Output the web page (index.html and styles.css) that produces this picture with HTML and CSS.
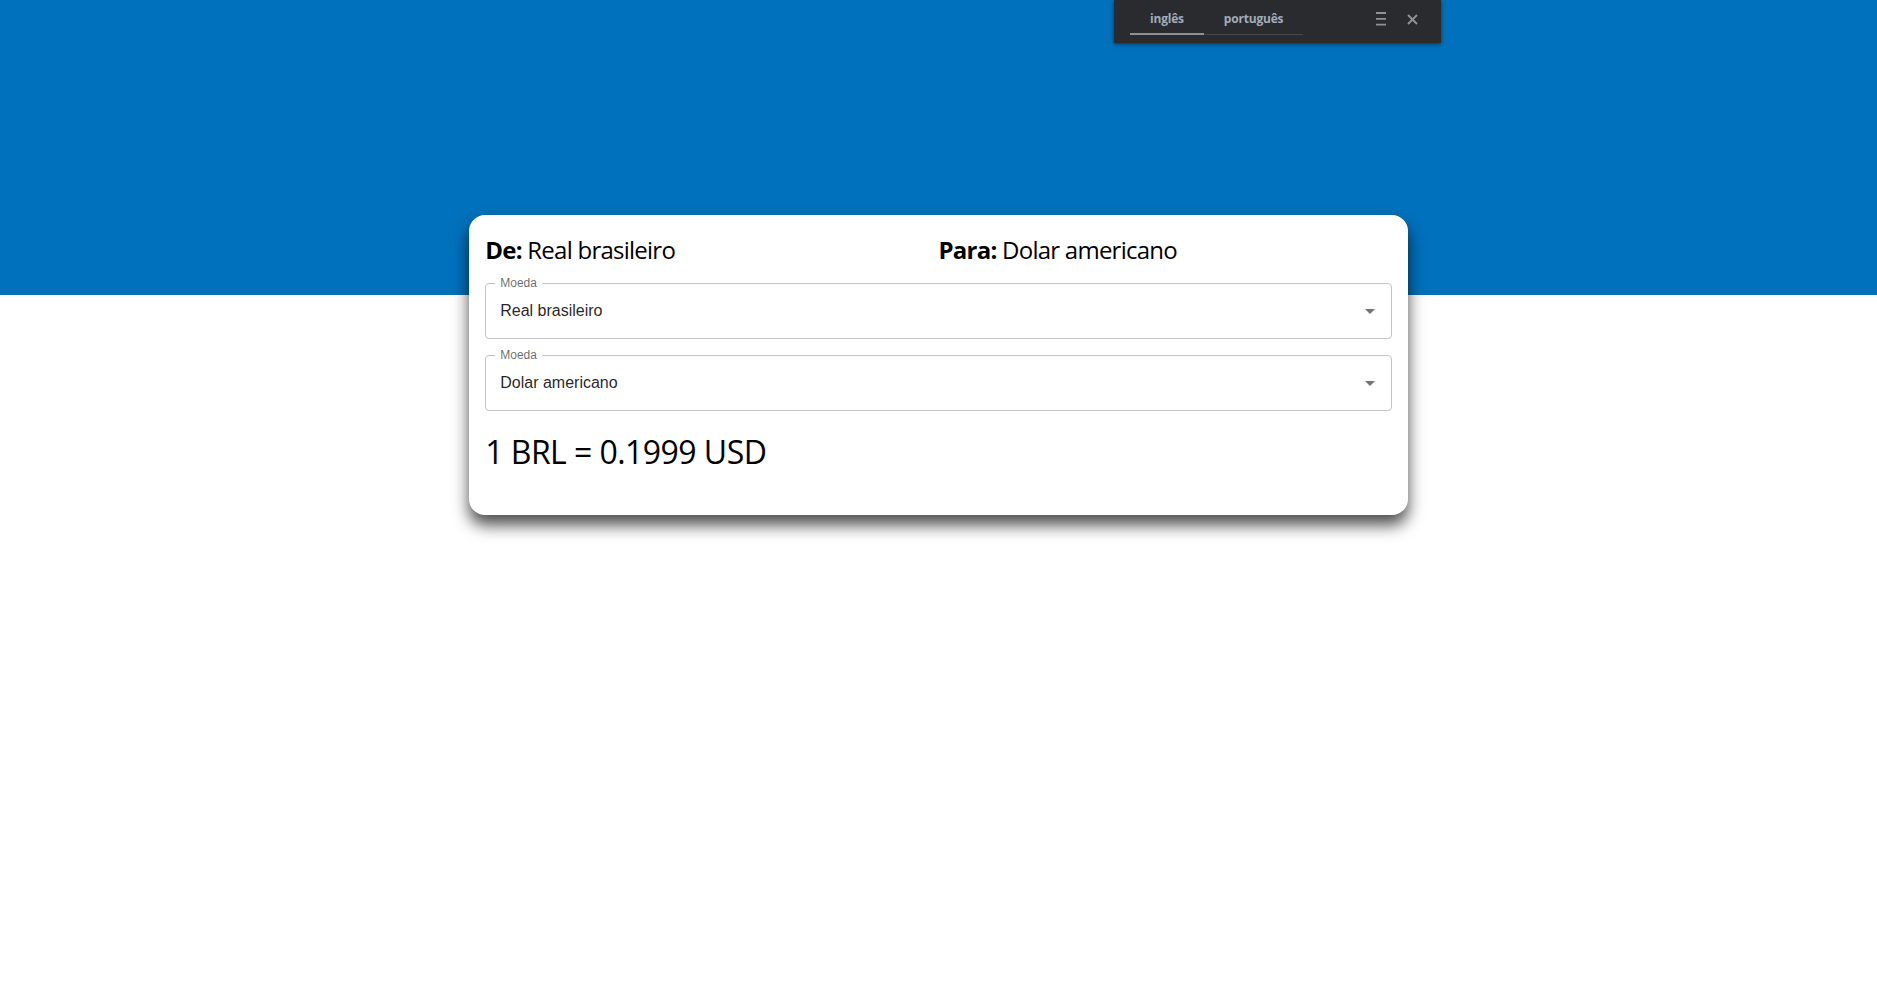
FILE: index.html
```html
<!DOCTYPE html>
<html lang="pt-BR">
<head>
<meta charset="utf-8">
<title>Conversor de moedas</title>
<link rel="stylesheet" href="styles.css">
</head>
<body>
  <div class="hero"></div>
  <main class="wrap">
    <section class="card">
      <div class="heading">
        <div class="col"><strong>De:</strong> Real brasileiro</div>
        <div class="col"><strong>Para:</strong> Dolar americano</div>
      </div>
      <div class="field">
        <span class="label">Moeda</span>
        <span class="value">Real brasileiro</span>
        <svg class="arrow" width="10" height="5" viewBox="0 0 10 5"><path d="M0 0l5 5 5-5z" fill="#757575"/></svg>
      </div>
      <div class="field">
        <span class="label">Moeda</span>
        <span class="value">Dolar americano</span>
        <svg class="arrow" width="10" height="5" viewBox="0 0 10 5"><path d="M0 0l5 5 5-5z" fill="#757575"/></svg>
      </div>
      <div class="result">1 BRL = 0.1999 USD</div>
    </section>
  </main>

  <div class="translate-bar">
    <div class="tabs">
      <div class="tab active">inglês</div>
      <div class="tab">português</div>
    </div>
    <div class="spacer"></div>
    <svg class="menu-icon" width="10" height="14" viewBox="0 0 10 14"><path d="M0 1h10M0 6.8h10M0 12.6h10" stroke="#8f9296" stroke-width="1.8"/></svg>
    <svg class="close-icon" width="11" height="11" viewBox="0 0 11 11"><path d="M1 1l9 9M10 1l-9 9" stroke="#8f9296" stroke-width="1.9"/></svg>
  </div>
</body>
</html>
```

FILE: styles.css
```css
html, body {
  margin: 0;
  padding: 0;
  background: #ffffff;
}

body {
  min-height: 100vh;
  font-family: "Open Sans", "Noto Sans", sans-serif;
  color: #000;
}

.hero {
  height: 295px;
  background: #0071bc;
}

.wrap {
  display: flex;
  justify-content: center;
  margin-top: -80px;
  padding-bottom: 60px;
  position: relative;
  z-index: 1;
}

.card {
  width: 50%;
  box-sizing: border-box;
  background: #fff;
  border-radius: 16px;
  padding: 19px 16px 41px;
  box-shadow: 0 10px 16px rgba(0, 0, 0, 0.7);
}

.heading {
  display: flex;
  font-size: 24px;
  line-height: 32px;
  letter-spacing: -0.75px;
  margin-bottom: 17px;
}

.heading .col {
  flex: 1 1 50%;
  white-space: nowrap;
}

.heading strong {
  font-weight: 700;
}

.field {
  position: relative;
  height: 56px;
  box-sizing: border-box;
  border: 1px solid #c4c4c4;
  border-radius: 4px;
  display: flex;
  align-items: center;
  padding: 0 16px 0 14px;
  margin-bottom: 16px;
  font-family: "Liberation Sans", Arial, sans-serif;
}

.label {
  position: absolute;
  left: 9px;
  top: -8px;
  padding: 0 5px;
  background: #fff;
  font-size: 12px;
  line-height: 14px;
  color: rgba(0, 0, 0, 0.6);
}

.value {
  flex: 1;
  font-size: 16px;
  color: rgba(0, 0, 0, 0.87);
}

.arrow {
  display: block;
  margin-top: 1px;
}

.result {
  margin-top: 19px;
  font-size: 32px;
  line-height: 44px;
  letter-spacing: -0.55px;
}

.translate-bar {
  position: absolute;
  top: 0;
  left: 1114px;
  width: 327px;
  height: 43px;
  box-sizing: border-box;
  background: #2a2b2e;
  box-shadow: 0 1px 4px rgba(0, 0, 0, 0.55);
  display: flex;
  align-items: flex-start;
  padding: 0 23px 0 16px;
  z-index: 5;
}

.tabs {
  display: flex;
}

.tab {
  height: 35px;
  box-sizing: border-box;
  padding: 11px 20px 0;
  font-family: "Open Sans", sans-serif;
  font-weight: 700;
  font-size: 12px;
  line-height: 16px;
  color: #a2acba;
  border-bottom: 1px solid #46474b;
  letter-spacing: -0.2px;
}

.tab.active {
  border-bottom: 2px solid #8e9094;
}

.spacer {
  flex: 1;
}

.menu-icon {
  display: block;
  margin-top: 12px;
}

.close-icon {
  display: block;
  margin-top: 14px;
  margin-left: 21px;
}
```
